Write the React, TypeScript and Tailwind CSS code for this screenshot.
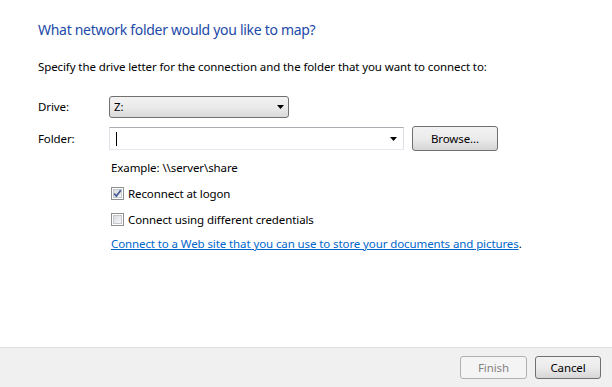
const font = { fontFamily: '"Segoe UI", "Noto Sans", "Open Sans", sans-serif' };

function Arrow() {
  return (
    <svg width="7" height="4" viewBox="0 0 7 4" className="shrink-0">
      <path d="M0 0h7L3.5 4z" fill="#000" />
    </svg>
  );
}

function CheckBox({ checked }: { checked?: boolean }) {
  return (
    <span className="relative flex h-[13px] w-[13px] shrink-0 items-center justify-center border border-[#8e8f8f] bg-white">
      <span className="h-[9px] w-[9px] border border-[#c4c7cc] bg-gradient-to-br from-[#d8dbe0] to-[#f7f7f7]" />
      {checked && (
        <svg
          width="9"
          height="9"
          viewBox="0 0 9 9"
          className="absolute left-[1px] top-[1px]"
        >
          <path
            d="M1.2 4.6 3.4 7 7.8 1.2"
            fill="none"
            stroke="#4a5f97"
            strokeWidth="1.8"
          />
        </svg>
      )}
    </span>
  );
}

function Button({
  label,
  disabled,
  className = '',
}: {
  label: string;
  disabled?: boolean;
  className?: string;
}) {
  return (
    <button
      disabled={disabled}
      className={`flex h-[23px] items-center justify-center rounded-[3px] border ${
        disabled
          ? 'border-[#adb2b5] bg-[#f4f4f4] text-[#838383]'
          : 'border-[#707070] bg-gradient-to-b from-[#f2f2f2] via-[#ebebeb] to-[#d6d6d6] text-black'
      } ${className}`}
    >
      {label}
    </button>
  );
}

export default function App() {
  return (
    <div
      className="flex h-[387px] w-[612px] flex-col bg-white text-[11.5px] leading-[16px] tracking-[-0.1px] text-black"
      style={font}
    >
      <div className="flex flex-1 flex-col pl-[38px] pt-[20px]">
        <h1 className="text-[14px] leading-[20px] tracking-[-0.3px] text-[#1c4aa8]">
          What network folder would you like to map?
        </h1>
        <p className="mt-[19px]">
          Specify the drive letter for the connection and the folder that you
          want to connect to:
        </p>

        <div className="mt-[21px] flex h-[22px] items-center">
          <span className="w-[71px]">Drive:</span>
          <div className="flex h-[22px] w-[180px] items-center justify-between rounded-[3px] border border-[#707070] bg-gradient-to-b from-[#f2f2f2] via-[#ebebeb] to-[#d9d9d9] pl-[4px] pr-[4px]">
            <span>Z:</span>
            <Arrow />
          </div>
        </div>

        <div className="mt-[8px] flex h-[25px] items-center">
          <span className="w-[71px]">Folder:</span>
          <div className="flex h-[23px] w-[295px] items-center justify-between border border-[#abadb3] border-b-[#e3e9ef] border-l-[#e2e3ea] border-r-[#dbdfe6] bg-white pl-[6px] pr-[6px]">
            <span className="h-[14px] w-px bg-black" />
            <Arrow />
          </div>
          <Button label="Browse..." className="ml-[8px] h-[25px] w-[86px]" />
        </div>

        <div className="ml-[73px] mt-[9px] flex flex-col">
          <span>Example: \\server\share</span>
          <label className="mt-[9px] flex h-[17px] items-center gap-[4px]">
            <CheckBox checked />
            <span>Reconnect at logon</span>
          </label>
          <label className="mt-[9px] flex h-[17px] items-center gap-[4px]">
            <CheckBox />
            <span>Connect using different credentials</span>
          </label>
          <p className="mt-[8px]">
            <a className="text-[#0066cc] underline">
              Connect to a Web site that you can use to store your documents
              and pictures
            </a>
            .
          </p>
        </div>
      </div>

      <div className="flex h-[40px] items-center justify-end gap-[8px] border-t border-[#dfdfdf] bg-[#f0f0f0] pr-[11px]">
        <Button label="Finish" disabled className="w-[67px]" />
        <Button label="Cancel" className="w-[66px]" />
      </div>
    </div>
  );
}
